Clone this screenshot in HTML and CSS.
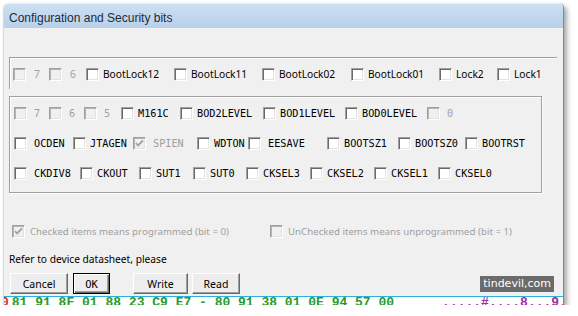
FILE: index.html
```html
<!DOCTYPE html>
<html lang="en">
<head>
    <meta charset="UTF-8">
    <title>Configuration and Security bits</title>
    <link rel="stylesheet" href="styles.css">
</head>
<body>
    <div class="window">
        <div class="titlebar">Configuration and Security bits</div>
        <div class="client">
            <div class="group lock">
                <div class="row r1">
                    <label class="cb off"><span class="box"></span><span class="txt lead">7</span></label>
                    <label class="cb off"><span class="box"></span><span class="txt lead">6</span></label>
                    <label class="cb"><span class="box"></span><span class="txt">BootLock12</span></label>
                    <label class="cb"><span class="box"></span><span class="txt">BootLock11</span></label>
                    <label class="cb"><span class="box"></span><span class="txt">BootLock02</span></label>
                    <label class="cb"><span class="box"></span><span class="txt">BootLock01</span></label>
                    <label class="cb"><span class="box"></span><span class="txt">Lock2</span></label>
                    <label class="cb"><span class="box"></span><span class="txt">Lock1</span></label>
                </div>
            </div>

            <div class="group fuse">
                <div class="row r2">
                    <label class="cb off"><span class="box"></span><span class="txt lead">7</span></label>
                    <label class="cb off"><span class="box"></span><span class="txt lead">6</span></label>
                    <label class="cb off"><span class="box"></span><span class="txt lead">5</span></label>
                    <label class="cb"><span class="box"></span><span class="txt">M161C</span></label>
                    <label class="cb"><span class="box"></span><span class="txt">BOD2LEVEL</span></label>
                    <label class="cb"><span class="box"></span><span class="txt">BOD1LEVEL</span></label>
                    <label class="cb"><span class="box"></span><span class="txt">BOD0LEVEL</span></label>
                    <label class="cb off"><span class="box"></span><span class="txt lead">0</span></label>
                </div>
                <div class="row r3">
                    <label class="cb"><span class="box"></span><span class="txt lead">OCDEN</span></label>
                    <label class="cb"><span class="box"></span><span class="txt">JTAGEN</span></label>
                    <label class="cb off"><span class="box"><svg viewBox="0 0 11 11"><polyline points="2,5 4,7.5 9,2.5"/></svg></span><span class="txt lead">SPIEN</span></label>
                    <label class="cb"><span class="box"></span><span class="txt">WDTON</span></label>
                    <label class="cb"><span class="box"></span><span class="txt lead">EESAVE</span></label>
                    <label class="cb"><span class="box"></span><span class="txt">BOOTSZ1</span></label>
                    <label class="cb"><span class="box"></span><span class="txt">BOOTSZ0</span></label>
                    <label class="cb"><span class="box"></span><span class="txt">BOOTRST</span></label>
                </div>
                <div class="row r4">
                    <label class="cb"><span class="box"></span><span class="txt lead">CKDIV8</span></label>
                    <label class="cb"><span class="box"></span><span class="txt">CKOUT</span></label>
                    <label class="cb"><span class="box"></span><span class="txt">SUT1</span></label>
                    <label class="cb"><span class="box"></span><span class="txt">SUT0</span></label>
                    <label class="cb"><span class="box"></span><span class="txt">CKSEL3</span></label>
                    <label class="cb"><span class="box"></span><span class="txt">CKSEL2</span></label>
                    <label class="cb"><span class="box"></span><span class="txt">CKSEL1</span></label>
                    <label class="cb"><span class="box"></span><span class="txt">CKSEL0</span></label>
                </div>
            </div>

            <div class="legend">
                <label class="cb off"><span class="box"><svg viewBox="0 0 11 11"><polyline points="2,5 4,7.5 9,2.5"/></svg></span><span class="txt">Checked items means programmed (bit = 0)</span></label>
                <label class="cb off"><span class="box"></span><span class="txt">UnChecked items means unprogrammed (bit = 1)</span></label>
            </div>

            <div class="note">Refer to device datasheet, please</div>

            <div class="buttons">
                <button class="btn cancel">Cancel</button>
                <button class="btn ok">OK</button>
                <button class="btn write">Write</button>
                <button class="btn read">Read</button>
            </div>

            <div class="watermark">tindevil,com</div>
        </div>
        <div class="dump"><span class="addr">0</span><span class="hex">81 91 8F 01 88 23 C9 E7 - 80 91 38 01 0E 94 57 00</span><span class="ascii">.....#....8...9.</span></div>
    </div>
</body>
</html>
```

FILE: styles.css
```css
* { box-sizing: border-box; }
body {
    margin: 0;
    background: #fff;
    font-family: 'Noto Sans', 'Liberation Sans', sans-serif;
    color: #000;
}
.window {
    margin: 3px 0 0 3px;
    width: 561px;
    border-left: 1px solid #d6dbe0;
    border-right: 1px solid #3a9fd2;
    border-radius: 5px 5px 0 0;
    box-shadow: 3px 3px 5px rgba(0, 0, 0, 0.35);
    background: #fff;
}
.titlebar {
    height: 25px;
    line-height: 26px;
    padding: 1px 0 0 5px;
    font-size: 12px;
    font-family: 'Liberation Sans', sans-serif;
    color: #1c2c3c;
    background: linear-gradient(#cddff2, #b8d0ea);
    border-top: 1px solid #e6eef7;
    border-radius: 5px 5px 0 0;
}
.client {
    position: relative;
    height: 269px;
    padding: 29px 0 0 5px;
    background: #f0f0f0;
    border-bottom: 1px solid #2fb0d8;
}

/* etched frames */
.group { border-color: #a0a0a0; border-style: solid; }
.lock {
    width: 548px;
    border-width: 1px 0 0 1px;
    padding: 1px 0 0 3px;
    box-shadow: inset 1px 1px 0 #fff;
}
.fuse {
    margin-top: 7px;
    width: 533px;
    border-width: 1px;
    padding: 1px 0 4px 4px;
    box-shadow: inset 1px 1px 0 #fff, 1px 1px 0 #fff;
}
.row {
    display: grid;
    height: 30px;
    align-items: center;
}
.r1 { grid-template-columns: 36px 37px 88px 88px 89px 88px 58px auto; }
.r2 { grid-template-columns: 35px 35px 37px 59px 83px 82px 82px auto; }
.r3 { grid-template-columns: 59px 60px 64px 51px 79px 71px 67px auto; }
.r4 { grid-template-columns: 66px 59px 54px 53px 64px 64px 64px auto; }

.cb {
    display: flex;
    align-items: center;
    gap: 4px;
    white-space: nowrap;
}
.box {
    flex: none;
    width: 13px;
    height: 13px;
    border: 1px solid;
    border-color: #a0a0a0 #fff #fff #a0a0a0;
    box-shadow: inset 1px 1px 0 #696969, inset -1px -1px 0 #e3e3e3;
    background: #fff;
}
.box svg { display: block; width: 11px; height: 11px; }
.box polyline { fill: none; stroke: #a0a0a0; stroke-width: 1.8; }
.off .box { background: #f0f0f0; box-shadow: inset 1px 1px 0 #b4b4b4, inset -1px -1px 0 #e3e3e3; }
.txt { font-size: 10.2px; }
.off .txt { color: #a0a0a0; }
.lead { padding-left: 4px; }
.fuse .txt {
    font-family: 'DejaVu Sans Mono', monospace;
    font-size: 10.2px;
}
.fuse .lead { padding-left: 3px; }

.legend {
    display: grid;
    grid-template-columns: 258px auto;
    margin-top: 30px;
    padding-left: 3px;
    height: 16px;
    align-items: center;
}
.legend .cb { gap: 5px; }
.legend .txt { font-size: 9.7px; }
.note {
    margin-top: 12px;
    height: 16px;
    line-height: 16px;
    font-size: 10.2px;
}
.buttons {
    display: flex;
    margin-top: 6px;
    padding-left: 1px;
}
.btn {
    height: 21px;
    padding: 0;
    font-family: 'Noto Sans', 'Liberation Sans', sans-serif;
    font-size: 10.5px;
    color: #000;
    background: #ededed;
    border: 1px solid;
    border-color: #fff #696969 #696969 #fff;
    box-shadow: inset -1px -1px 0 #a0a0a0;
}
.cancel { width: 58px; }
.ok {
    width: 37px;
    margin-left: 5px;
    border-color: #000;
    box-shadow: inset 1px 1px 0 #fff, inset -1px -1px 0 #696969, inset -2px -2px 0 #a0a0a0;
    font-family: 'DejaVu Sans Mono', monospace;
    font-size: 10.5px;
}
.write { width: 55px; margin-left: 23px; }
.read { width: 48px; margin-left: 4px; }

.watermark {
    position: absolute;
    right: 9px;
    bottom: 4px;
    height: 16px;
    padding: 0 3px;
    line-height: 16px;
    font-family: 'DejaVu Sans', sans-serif;
    font-size: 11px;
    color: #fff;
    background: #6b6b6b;
}

.dump {
    display: flex;
    height: 8px;
    overflow: hidden;
    white-space: pre;
    font-family: 'Liberation Mono', monospace;
    font-size: 13px;
    font-weight: bold;
    line-height: 11px;
}
.addr { width: 9px; margin-left: -3px; color: #d03030; }
.hex { margin-left: 3px; color: #2a9a2a; }
.ascii { margin-left: 48px; color: #a030a0; }
```
